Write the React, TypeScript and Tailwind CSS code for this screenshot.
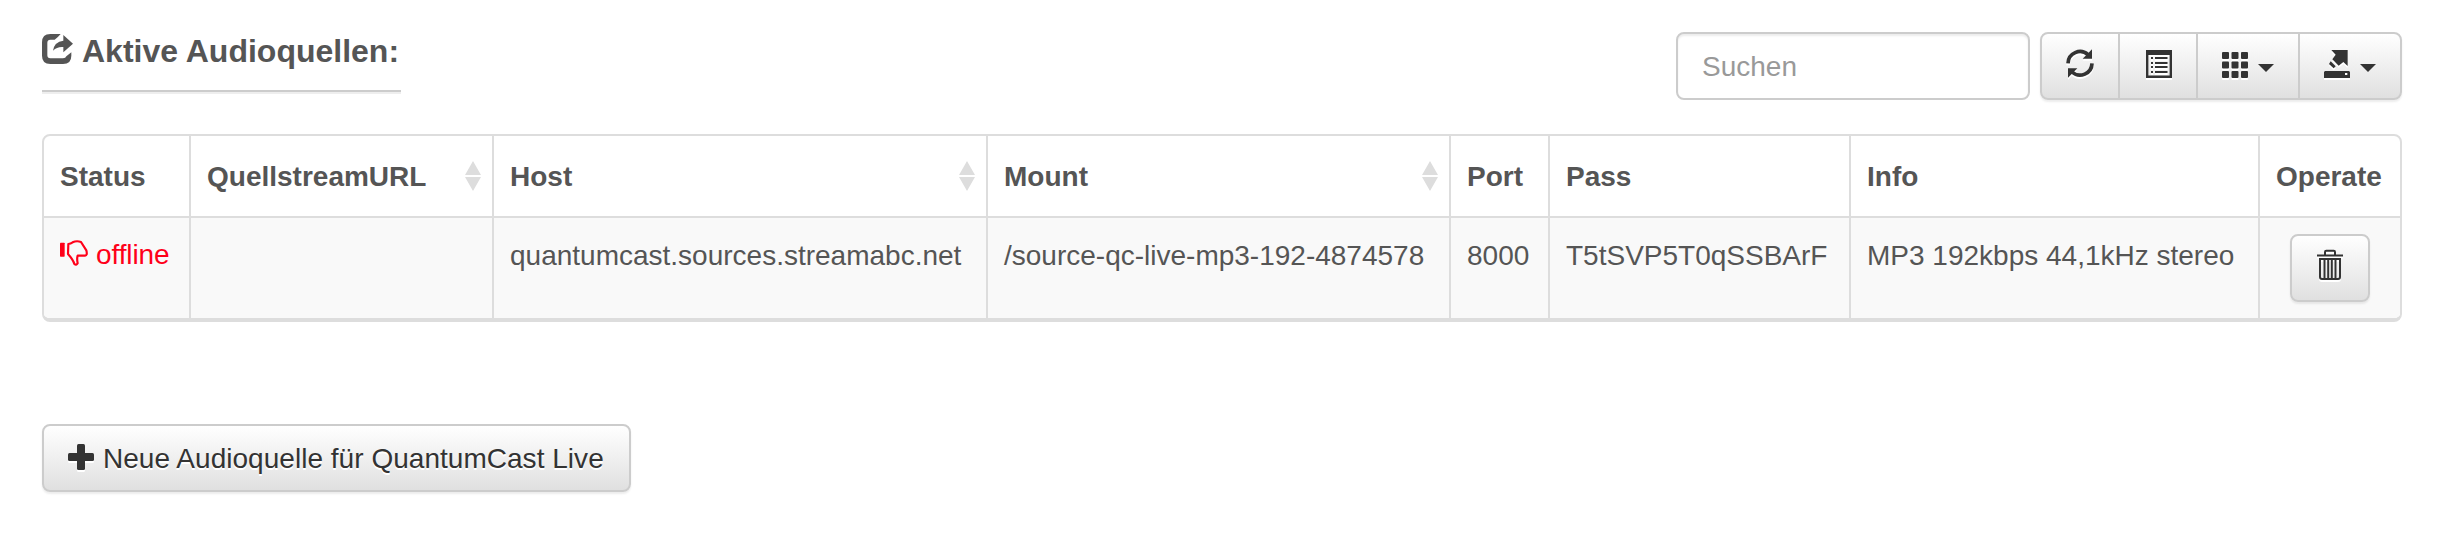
import React from "react";

const buttonFace =
  "border-2 border-[#ccc] bg-linear-to-b from-white to-[#e0e0e0] text-[#333] shadow-[inset_0_2px_0_rgba(255,255,255,.15),0_2px_2px_rgba(0,0,0,.075)]";
const glyph = "shrink-0 drop-shadow-[0_2px_0_#fff]";

function ShareIcon() {
  return (
    <svg className="shrink-0" width="31" height="30" viewBox="0 0 93 90" fill="currentColor">
      <path d="M56 0H25Q0 0 0 25V65Q0 90 25 90H63Q88 90 88 65V55L73 67Q71 73 63 73H25Q16 73 16 64V26Q16 17 25 17H38Q46 12 56 0Z" />
      <path d="M64 3L93 29L64 55V39Q46 37 33 50Q37 23 64 20Z" />
    </svg>
  );
}

function RefreshIcon() {
  return (
    <svg className={glyph} width="28" height="29" viewBox="0 0 84 87">
      <path d="M6 43A36 36 0 0 1 66 17" fill="none" stroke="currentColor" strokeWidth="11" />
      <path d="M78 1V29H50Z" fill="currentColor" />
      <path d="M78 43A36 36 0 0 1 18 69" fill="none" stroke="currentColor" strokeWidth="11" />
      <path d="M6 86V58H34Z" fill="currentColor" />
    </svg>
  );
}

function ListIcon() {
  return (
    <svg className={glyph} width="26" height="28" viewBox="0 0 26 28" fill="currentColor">
      <path fillRule="evenodd" d="M0 0H26V28H0ZM2.4 5V25.6H23.6V5Z" />
      <path d="M5 7H7V9H5ZM9 7H21.5V9H9ZM5 12H7V14H5ZM9 12H21.5V14H9ZM5 16H7V18H5ZM9 16H21.5V18H9ZM5 21H7V23H5ZM9 21H21.5V23H9Z" />
    </svg>
  );
}

function GridIcon() {
  const steps = [0, 9.5, 19];
  return (
    <svg className={glyph} width="26" height="26" viewBox="0 0 26 26" fill="currentColor">
      {steps.map((y) => steps.map((x) => <rect key={`${x}-${y}`} x={x} y={y} width="7" height="7" rx="1" />))}
    </svg>
  );
}

function ExportIcon() {
  return (
    <svg className={glyph} width="26" height="28" viewBox="0 0 78 84" fill="currentColor">
      <path d="M22 0H71V48L58 36L44 47L25 28L35 14Z" />
      <path d="M20 34L35 49L29 55L15 42Z" />
      <path fillRule="evenodd" d="M3 63H75L78 66V84H0V66ZM63 69V75H70V69Z" />
    </svg>
  );
}

function Caret() {
  return (
    <svg className="shrink-0" width="16" height="8" viewBox="0 0 16 8" fill="currentColor">
      <path d="M0 0H16L8 8Z" />
    </svg>
  );
}

function ThumbDownIcon() {
  return (
    <svg className="shrink-0" width="28" height="26" viewBox="0 0 84 78">
      <rect x="0" y="8" width="14" height="42" rx="2" fill="currentColor" />
      <path
        d="M25 12Q32 11 38 7Q50 1 63 6L79 31Q83 46 75 47H53Q50 56 53 70Q49 77 43 72Q40 60 24 42Z"
        fill="none"
        stroke="currentColor"
        strokeWidth="6.5"
        strokeLinejoin="round"
      />
    </svg>
  );
}

function TrashIcon() {
  return (
    <svg className={glyph} width="26" height="31" viewBox="0 0 26 31" fill="none" stroke="currentColor" strokeWidth="2">
      <path d="M0 6.5H26" />
      <path d="M8 6V3Q8 1.7 9.3 1.7H16.7Q18 1.7 18 3V6" />
      <path d="M3 10H23V28Q23 30 21 30H5Q3 30 3 28Z" />
      <path d="M7.5 10V29M11.2 10V29M14.8 10V29M18.5 10V29" />
    </svg>
  );
}

function PlusIcon() {
  return (
    <svg className={glyph} width="26" height="26" viewBox="0 0 26 26" fill="currentColor">
      <rect x="9" y="0" width="8" height="26" rx="1.5" />
      <rect x="0" y="9" width="26" height="8" rx="1.5" />
    </svg>
  );
}

function SortIcon() {
  return (
    <svg className="shrink-0" width="16" height="30" viewBox="0 0 16 30" fill="#ddd">
      <path d="M8 0L16 14H0ZM0 16H16L8 30Z" />
    </svg>
  );
}

const columns = [
  { label: "Status", width: "w-[145px]", sortable: false },
  { label: "QuellstreamURL", width: "w-[303px]", sortable: true },
  { label: "Host", width: "w-[494px]", sortable: true },
  { label: "Mount", width: "w-[463px]", sortable: true },
  { label: "Port", width: "w-[99px]", sortable: false },
  { label: "Pass", width: "w-[301px]", sortable: false },
  { label: "Info", width: "w-[409px]", sortable: false },
  { label: "Operate", width: "w-[142px]", sortable: false },
];

const source = [
  "",
  "quantumcast.sources.streamabc.net",
  "/source-qc-live-mp3-192-4874578",
  "8000",
  "T5tSVP5T0qSSBArF",
  "MP3 192kbps 44,1kHz stereo",
];

export default function App() {
  return (
    <div className="h-[534px] w-[2446px] bg-white pt-8 pr-11 pl-[42px] font-['Liberation_Sans',Arial,sans-serif] text-[28px] leading-[40px] text-[#555]">
      <header className="flex h-[102px] items-start justify-between">
        <h2 className="flex h-[60px] w-[359px] items-start gap-[9px] border-b-2 border-[#ccc] text-[32px] leading-[38px] font-bold whitespace-nowrap shadow-[0_2px_0_#eee]">
          <span className="pt-[2px]"><ShareIcon /></span>
          Aktive Audioquellen:
        </h2>
        <div className="flex gap-[10px]">
          <input
            placeholder="Suchen"
            className="h-[68px] w-[354px] rounded-lg border-2 border-[#ccc] bg-white px-6 pt-px shadow-[inset_0_2px_2px_rgba(0,0,0,.075)] outline-none placeholder:text-[#999]"
          />
          <div className={`flex h-[68px] w-[362px] rounded-lg ${buttonFace}`}>
            <button className="flex w-[76px] items-start justify-center pt-[15px]">
              <RefreshIcon />
            </button>
            <button className="flex w-[78px] items-start justify-center border-l-2 border-[#ccc] pt-4 pl-px">
              <ListIcon />
            </button>
            <button className="flex w-[102px] items-start gap-[10px] border-l-2 border-[#ccc] pt-[18px] pl-[24px]">
              <GridIcon />
              <span className="pt-[12px]"><Caret /></span>
            </button>
            <button className="flex w-[102px] items-start gap-[10px] border-l-2 border-[#ccc] pt-4 pl-[24px]">
              <ExportIcon />
              <span className="pt-[14px]"><Caret /></span>
            </button>
          </div>
        </div>
      </header>

      <div className="h-[188px] w-[2360px] overflow-hidden rounded-lg border-2 border-b-4 border-[#ddd]">
        <table className="w-full table-fixed border-separate border-spacing-0 whitespace-nowrap">
          <thead>
            <tr className="h-[82px]">
              {columns.map((column) => (
                <th
                  key={column.label}
                  className={`${column.width} border-b-2 border-l-2 border-[#ddd] p-0 text-left align-middle font-bold first:border-l-0`}
                >
                  <div className="flex items-center justify-between pr-[11px] pl-4">
                    <span className="pt-[2px]">{column.label}</span>
                    {column.sortable && <SortIcon />}
                  </div>
                </th>
              ))}
            </tr>
          </thead>
          <tbody>
            <tr className="h-[100px] bg-[#f9f9f9] align-top">
              <td className="p-0">
                <div className="flex items-start gap-2 pt-[17px] pl-4 text-[#ff0019]">
                  <span className="pt-[5px]"><ThumbDownIcon /></span>
                  <span className="tracking-[-0.1px]">offline</span>
                </div>
              </td>
              {source.map((value, index) => (
                <td key={index} className="border-l-2 border-[#ddd] px-4 pt-[18px] pb-0">
                  {value}
                </td>
              ))}
              <td className="border-l-2 border-[#ddd] p-0">
                <div className="flex justify-center pt-4">
                  <button className={`flex h-[68px] w-20 items-start justify-center rounded-lg pt-[13px] ${buttonFace}`}>
                    <TrashIcon />
                  </button>
                </div>
              </td>
            </tr>
          </tbody>
        </table>
      </div>

      <button
        className={`mt-[102px] flex h-[68px] w-[589px] items-start gap-[9px] rounded-lg pt-[13px] pl-6 tracking-[0.03px] whitespace-nowrap [text-shadow:0_2px_0_#fff] ${buttonFace}`}
      >
        <span className="pt-[5px]"><PlusIcon /></span>
        Neue Audioquelle für QuantumCast Live
      </button>
    </div>
  );
}
